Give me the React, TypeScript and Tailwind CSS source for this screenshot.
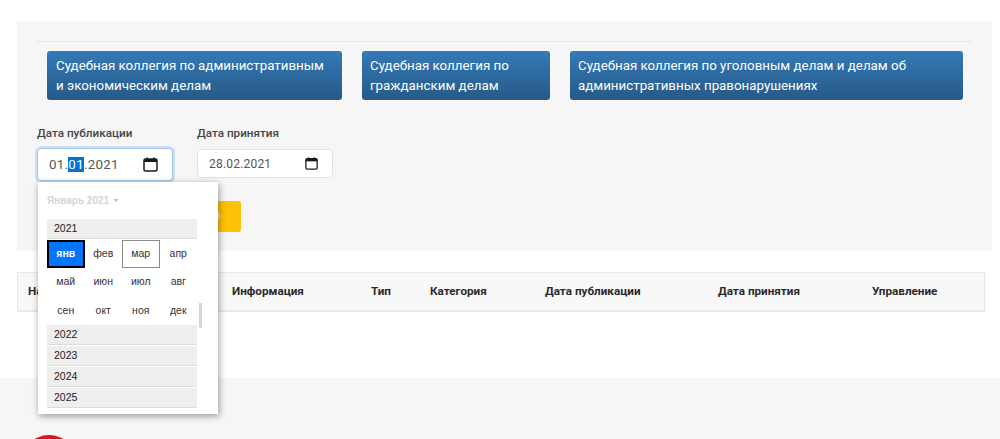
import React from "react";

function CalendarIcon({ className }: { className: string }) {
  return (
    <svg viewBox="0 0 15 15" className={className} fill="none">
      <rect x="1" y="2" width="13" height="12" rx="1.5" stroke="#1a1a1a" strokeWidth="1.5" />
      <rect x="1" y="2" width="13" height="3" fill="#1a1a1a" />
      <rect x="3.5" y="0.5" width="1.5" height="2" fill="#1a1a1a" />
      <rect x="10" y="0.5" width="1.5" height="2" fill="#1a1a1a" />
    </svg>
  );
}

function Collegium({ width, children }: { width: string; children: React.ReactNode }) {
  return (
    <div className={`${width} h-[49px] shrink-0 whitespace-nowrap rounded-[3px] bg-gradient-to-b from-[#337ab7] to-[#265a88] pl-[8px] pt-[5px] text-[13.33px] leading-[20px] text-white`}>
      {children}
    </div>
  );
}

const months = [
  ["янв", "фев", "мар", "апр"],
  ["май", "июн", "июл", "авг"],
  ["сен", "окт", "ноя", "дек"],
];

const columns: [string, string][] = [
  ["w-[204px]", "Название"],
  ["w-[139px]", "Информация"],
  ["w-[59px]", "Тип"],
  ["w-[115px]", "Категория"],
  ["w-[173px]", "Дата публикации"],
  ["w-[154px]", "Дата принятия"],
  ["w-[100px]", "Управление"],
];

function Month({ name }: { name: string }) {
  if (name === "янв") {
    return (
      <div className="flex h-[28px] w-[37.5px] items-center justify-center border-2 border-black bg-[#0075ff] text-[10.5px] font-bold text-white">
        {name}
      </div>
    );
  }
  if (name === "мар") {
    return (
      <div className="flex h-[28px] w-[37.5px] items-center justify-center border border-[#8a8a8a] text-[10.5px] text-[#333]">
        {name}
      </div>
    );
  }
  return <div className="flex h-[28px] w-[37.5px] items-center justify-center text-[10.5px] text-[#333]">{name}</div>;
}

function Year({ y }: { y: string }) {
  return (
    <div className="mb-[1px] flex h-[20px] w-[150px] items-center border-b border-[#dcdcdc] bg-[#eeeeee] pl-[7px] text-[10.5px] text-[#222]">
      {y}
    </div>
  );
}

export default function App() {
  return (
    <div className="relative h-[439px] w-[1000px] overflow-hidden bg-white pt-[21px] font-['Roboto',sans-serif]">
      <section className="ml-[17px] h-[230px] w-[975px] bg-[#f6f6f7] px-[20px] pt-[20px]">
        <div className="h-[1px] w-[935px] bg-[#e3e6ea]" />
        <div className="ml-[10px] mt-[9px] flex gap-[20px]">
          <Collegium width="w-[295px] pl-[9px]">
            Судебная коллегия по административным
            <br />и экономическим делам
          </Collegium>
          <Collegium width="w-[188px]">
            Судебная коллегия по
            <br />
            гражданским делам
          </Collegium>
          <Collegium width="w-[393px]">
            Судебная коллегия по уголовным делам и делам об
            <br />
            административных правонарушениях
          </Collegium>
        </div>
        <div className="mt-[26px] flex gap-[24px]">
          <div className="w-[136px]">
            <div className="h-[15px] text-[11.7px] font-medium leading-[15px] text-[#444]">Дата публикации</div>
            <div className="mt-[7px] flex h-[33px] items-center justify-between rounded-[4px] border border-[#9fc3ea] bg-white pl-[11px] pr-[14px] text-[13.3px] tracking-[0.3px] text-[#555] shadow-[0_0_0_2px_#cfe0f3]">
              <span>
                01.<span className="bg-[#0075d8] text-white">01</span>.2021
              </span>
              <CalendarIcon className="h-[15px] w-[15px]" />
            </div>
          </div>
          <div className="w-[136px]">
            <div className="h-[15px] text-[11.7px] font-medium leading-[15px] text-[#444]">Дата принятия</div>
            <div className="mt-[8px] flex h-[29px] items-center justify-between rounded-[4px] border border-[#dfe3e8] bg-white pl-[11px] pr-[14px] text-[12px] tracking-[0.2px] text-[#555]">
              <span>28.02.2021</span>
              <CalendarIcon className="h-[13px] w-[13px]" />
            </div>
          </div>
        </div>
        <div className="ml-[94px] mt-[20px] flex h-[31px] w-[110px] items-center justify-end rounded-[3px] bg-[#ffc107] pr-[21px] text-[11px] text-white">
          Найти
        </div>
      </section>

      <div className="ml-[17px] mt-[21px] flex h-[40px] w-[968px] items-center border border-b-2 border-[#e6e8ec] bg-[#f8f8f9] pl-[10px] text-[11.7px] font-bold text-[#2a2a2a]">
        {columns.map(([w, t]) => (
          <div key={t} className={`${w} shrink-0`}>
            {t}
          </div>
        ))}
      </div>

      <footer className="mt-[66px] h-[62px] bg-[#f6f6f7] pl-[21px] pt-[57px]">
        <div className="h-[56px] w-[56px] rounded-full bg-[#d8161c]" />
      </footer>

      <div className="absolute left-[38px] top-[182px] h-[232px] w-[180px] bg-white pl-[9px] pt-[12px] font-['Liberation_Sans',sans-serif] shadow-[1px_2px_7px_rgba(0,0,0,0.4)]">
        <div className="flex h-[12px] items-center gap-[4px] text-[10px] font-bold text-[#d4d4d4]">
          Январь 2021
          <span className="h-0 w-0 border-x-[3px] border-t-[3px] border-x-transparent border-t-[#c8c8c8]" />
        </div>
        <div className="relative mt-[13px]">
          <Year y="2021" />
          <div className="w-[150px]">
            {months.map((row) => (
              <div key={row[0]} className="flex h-[28.3px]">
                {row.map((m) => (
                  <Month key={m} name={m} />
                ))}
              </div>
            ))}
          </div>
          <Year y="2022" />
          <Year y="2023" />
          <Year y="2024" />
          <Year y="2025" />
          <div className="absolute left-[152px] top-[84px] h-[25px] w-[3px] bg-[#d6d6d6]" />
        </div>
      </div>
    </div>
  );
}
